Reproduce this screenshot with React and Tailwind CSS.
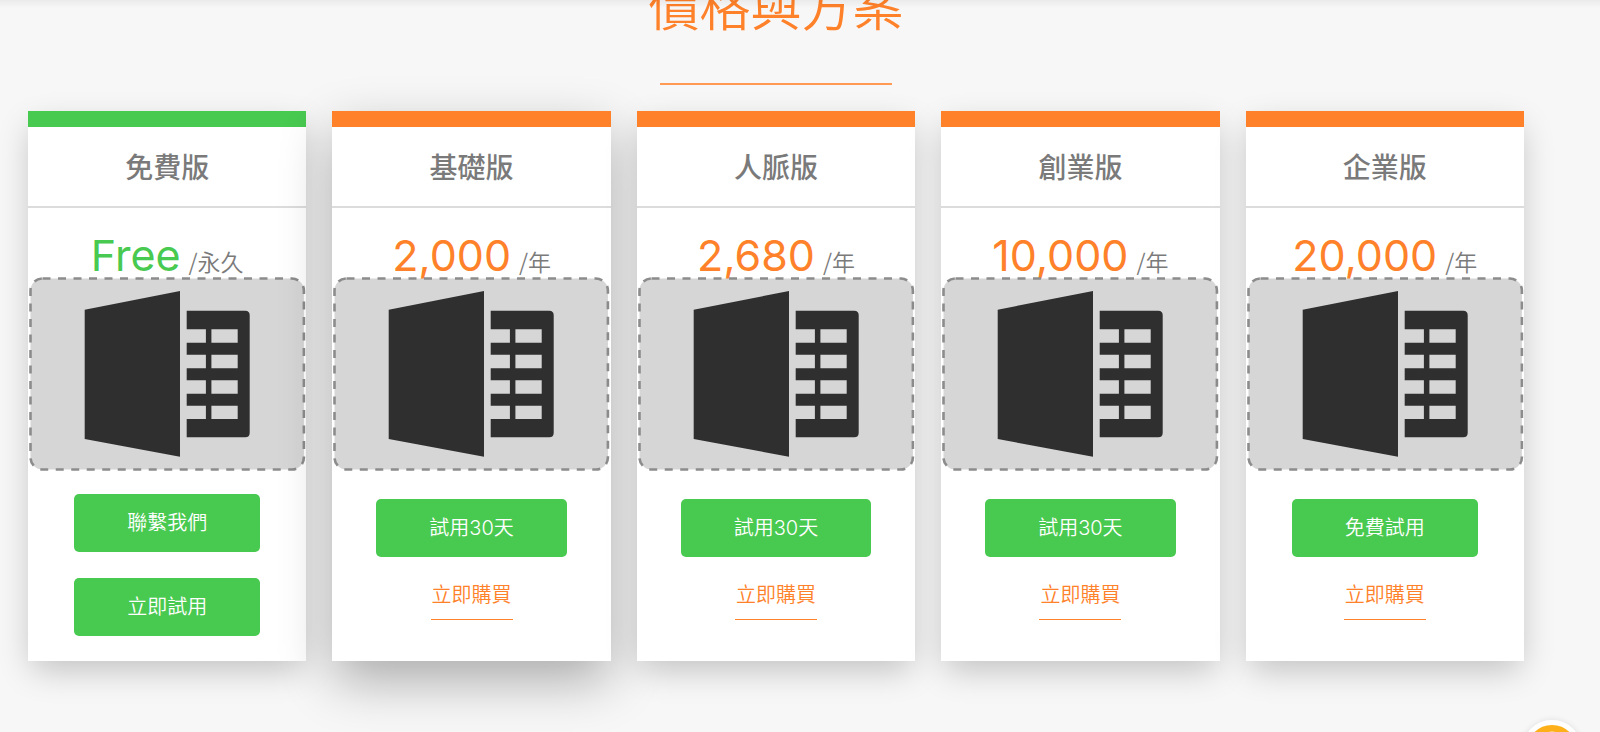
import React from 'react';

const plans = [
  { name: '免費版', price: 'Free', unit: '/永久', free: true, buttons: ['聯繫我們', '立即試用'] },
  { name: '基礎版', price: '2,000', unit: '/年', active: true, buttons: ['試用30天'], link: '立即購買' },
  { name: '人脈版', price: '2,680', unit: '/年', buttons: ['試用30天'], link: '立即購買' },
  { name: '創業版', price: '10,000', unit: '/年', buttons: ['試用30天'], link: '立即購買' },
  { name: '企業版', price: '20,000', unit: '/年', buttons: ['免費試用'], link: '立即購買' },
];

function FeaturePlaceholder() {
  return (
    <svg className="block w-full h-[194px]" aria-hidden="true">
      <rect
        x="2.5" y="1.5" rx="12" height="191"
        className="w-[calc(100%-5px)]"
        fill="#d6d6d6" stroke="#8c8c8c" strokeWidth="2.6" strokeDasharray="8 7.5"
      />
      <svg x="50%" y="14" overflow="visible">
        <g transform="translate(-82.5 0)" fill="#2f2f2f">
          <path d="M0 18.700 95.300 0v165.700L0 148z" />
          <path
            fillRule="evenodd"
            d="M102 19.700h58.500q4.500 0 4.500 4.500v117.600q0 4.500-4.500 4.500H102V128h19.200v-13.300H102v-12h19.200V89.300H102v-12h19.200V63.700H102v-12h19.200V38.300H102zM126.700 38.300v13.400H153V38.300zM126.700 63.700v13.600H153V63.700zM126.700 89.300v13.400H153V89.300zM126.700 114.700V128H153v-13.300z"
          />
        </g>
      </svg>
    </svg>
  );
}

function PlanCard({ plan }) {
  return (
    <article
      className={`relative flex h-[550px] min-w-0 flex-col border-t-16 bg-white ${plan.free ? 'border-[#48c950]' : 'border-[#ff8129]'} ${
        plan.active ? 'shadow-[0_20px_50px_-2px_rgba(0,0,0,0.32)]' : 'shadow-[0_12px_32px_-4px_rgba(0,0,0,0.23)]'
      }`}
    >
      <h3 className="flex h-[81px] shrink-0 items-center justify-center border-b-2 border-[#dcdcdc] pb-0.5 text-[28px] font-medium text-[#7a7a7a]">
        {plan.name}
      </h3>
      <p className="flex h-[69px] shrink-0 items-baseline justify-center gap-2 pt-[17px] leading-[60px] whitespace-nowrap">
        <span className={`font-[Inter,'Noto_Sans_CJK_TC',sans-serif] text-[43px] font-normal ${plan.free ? 'text-[#48c950]' : 'text-[#ff8129]'}`}>
          {plan.price}
        </span>
        <span className="text-[23px] font-[350] text-[#7a7a7a]">{plan.unit}</span>
      </p>
      <FeaturePlaceholder />
      <div className={`flex flex-col items-center ${plan.free ? 'gap-[26px] pt-[23px]' : 'gap-5 pt-7'}`}>
        {plan.buttons.map(label => (
          <button key={label} type="button" className="h-[58px] rounded-[5px] bg-[#48c950] px-[53px] font-[Inter,'Noto_Sans_CJK_TC',sans-serif] text-xl font-[350] text-white whitespace-nowrap">
            {label}
          </button>
        ))}
        {plan.link && (
          <a href="#buy" className="border-b border-[#ff8129] px-px pb-2 text-xl leading-[34px] font-[350] text-[#ff8129]">
            {plan.link}
          </a>
        )}
      </div>
    </article>
  );
}

export default function App() {
  return (
    <div className="min-h-screen overflow-hidden bg-[#f7f7f7] font-['Noto_Sans_CJK_TC',sans-serif]">
      {/* Bottom shadow of the site header */}
      <div className="fixed inset-x-0 top-0 z-10 h-2 bg-linear-to-b from-black/5 to-transparent" />

      <section className="pr-[76px] pb-[71px] pl-7">
        <h2 className="-mt-8 text-center text-[51px] leading-[72px] font-[350] text-[#ff8129]">價格與方案</h2>
        <hr className="mx-auto mt-[43px] w-[232px] border-t-2 border-[#ff9a54]" />
        <div className="mt-[26px] grid grid-cols-5 gap-[26px]">
          {plans.map(plan => <PlanCard key={plan.name} plan={plan} />)}
        </div>
      </section>

      {/* Chat widget */}
      <button
        type="button"
        aria-label="Chat"
        className="fixed right-[18px] -bottom-[48px] flex size-[60px] justify-center rounded-full border-5 border-white bg-[#fdb01a] pt-1.5 shadow-[0_0_6px_rgba(0,0,0,0.1)]"
      >
        <span className="size-3 rounded-full bg-[#fdd070]" />
      </button>
    </div>
  );
}
